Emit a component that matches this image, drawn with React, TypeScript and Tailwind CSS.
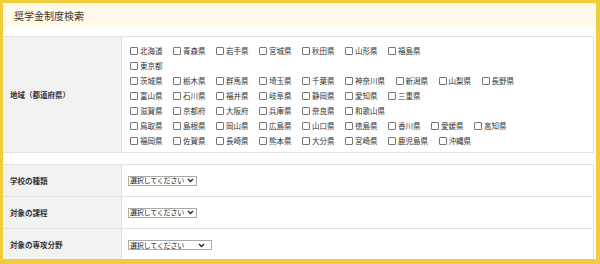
import React from "react";

const rows: string[][] = [
  ["北海道", "青森県", "岩手県", "宮城県", "秋田県", "山形県", "福島県"],
  ["東京都"],
  ["茨城県", "栃木県", "群馬県", "埼玉県", "千葉県", "神奈川県", "新潟県", "山梨県", "長野県"],
  ["富山県", "石川県", "福井県", "岐阜県", "静岡県", "愛知県", "三重県"],
  ["滋賀県", "京都府", "大阪府", "兵庫県", "奈良県", "和歌山県"],
  ["鳥取県", "島根県", "岡山県", "広島県", "山口県", "徳島県", "香川県", "愛媛県", "高知県"],
  ["福岡県", "佐賀県", "長崎県", "熊本県", "大分県", "宮崎県", "鹿児島県", "沖縄県"],
];

function Select({ wide }: { wide?: boolean }) {
  return (
    <div
      className={`flex items-center h-[10px] border border-[#a9a9a9] bg-white pl-[1px] pr-[2px] text-[7px] leading-none text-[#222] whitespace-nowrap overflow-hidden ${
        wide ? "w-[84px]" : "w-[69px]"
      }`}
    >
      <span className="flex-1 tracking-[-0.2px]">選択してください</span>
      <svg width="7" height="5" viewBox="0 0 7 5" className={`shrink-0 ${wide ? "mr-[4px]" : ""}`}>
        <path d="M1 1 L3.5 3.5 L6 1" fill="none" stroke="#222" strokeWidth="1.3" />
      </svg>
    </div>
  );
}

function Row2({ label, wide, last }: { label: string; wide?: boolean; last?: boolean }) {
  return (
    <div className={`flex h-[32px] ${last ? "" : "border-b border-[#e2e2e2]"}`}>
      <div className="w-[119px] bg-[#f2f2f2] border-r border-[#e2e2e2] flex items-center pl-[7px] text-[7.5px] font-bold text-[#333]">
        {label}
      </div>
      <div className="flex-1 flex items-center pl-[6px]">
        <Select wide={wide} />
      </div>
    </div>
  );
}

export default function App() {
  return (
    <div
      className="w-[600px] h-[264px] overflow-hidden bg-white border-l-[3px] border-t-[3px] border-r-[4px] border-b-[5px] border-[#f2cd3a] flex flex-col"
      style={{ fontFamily: '"Noto Sans CJK JP", "Noto Sans", sans-serif' }}
    >
      <div className="h-[25px] shrink-0 bg-[#fffaea] flex items-center pl-[11px] text-[10px] text-[#333]">
        奨学金制度検索
      </div>
      <div className="h-[8px] shrink-0" />
      <div className="flex shrink-0 h-[117px] border-y border-r border-[#e2e2e2] mr-[2px]">
        <div className="w-[119px] bg-[#f2f2f2] border-r border-[#e2e2e2] flex items-center pl-[7px] text-[7.5px] font-bold text-[#333]">
          地域（都道府県）
        </div>
        <div className="flex-1 flex flex-col pl-[8px] pt-[6px]">
          {rows.map((r, i) => (
            <div key={i} className="flex h-[15px] items-center">
              {r.map((p) => (
                <div key={p} className="flex items-center mr-[10.5px]">
                  <span className="w-[8px] h-[8px] border border-[#767676] rounded-[1px] bg-white mr-[2px]" />
                  <span className="text-[7.5px] leading-none text-[#333]">{p}</span>
                </div>
              ))}
            </div>
          ))}
        </div>
      </div>
      <div className="h-[11px] shrink-0" />
      <div className="flex flex-col border-t border-r border-[#e2e2e2] mr-[2px] flex-1">
        <Row2 label="学校の種類" />
        <Row2 label="対象の課程" />
        <Row2 label="対象の専攻分野" wide last />
      </div>
    </div>
  );
}
